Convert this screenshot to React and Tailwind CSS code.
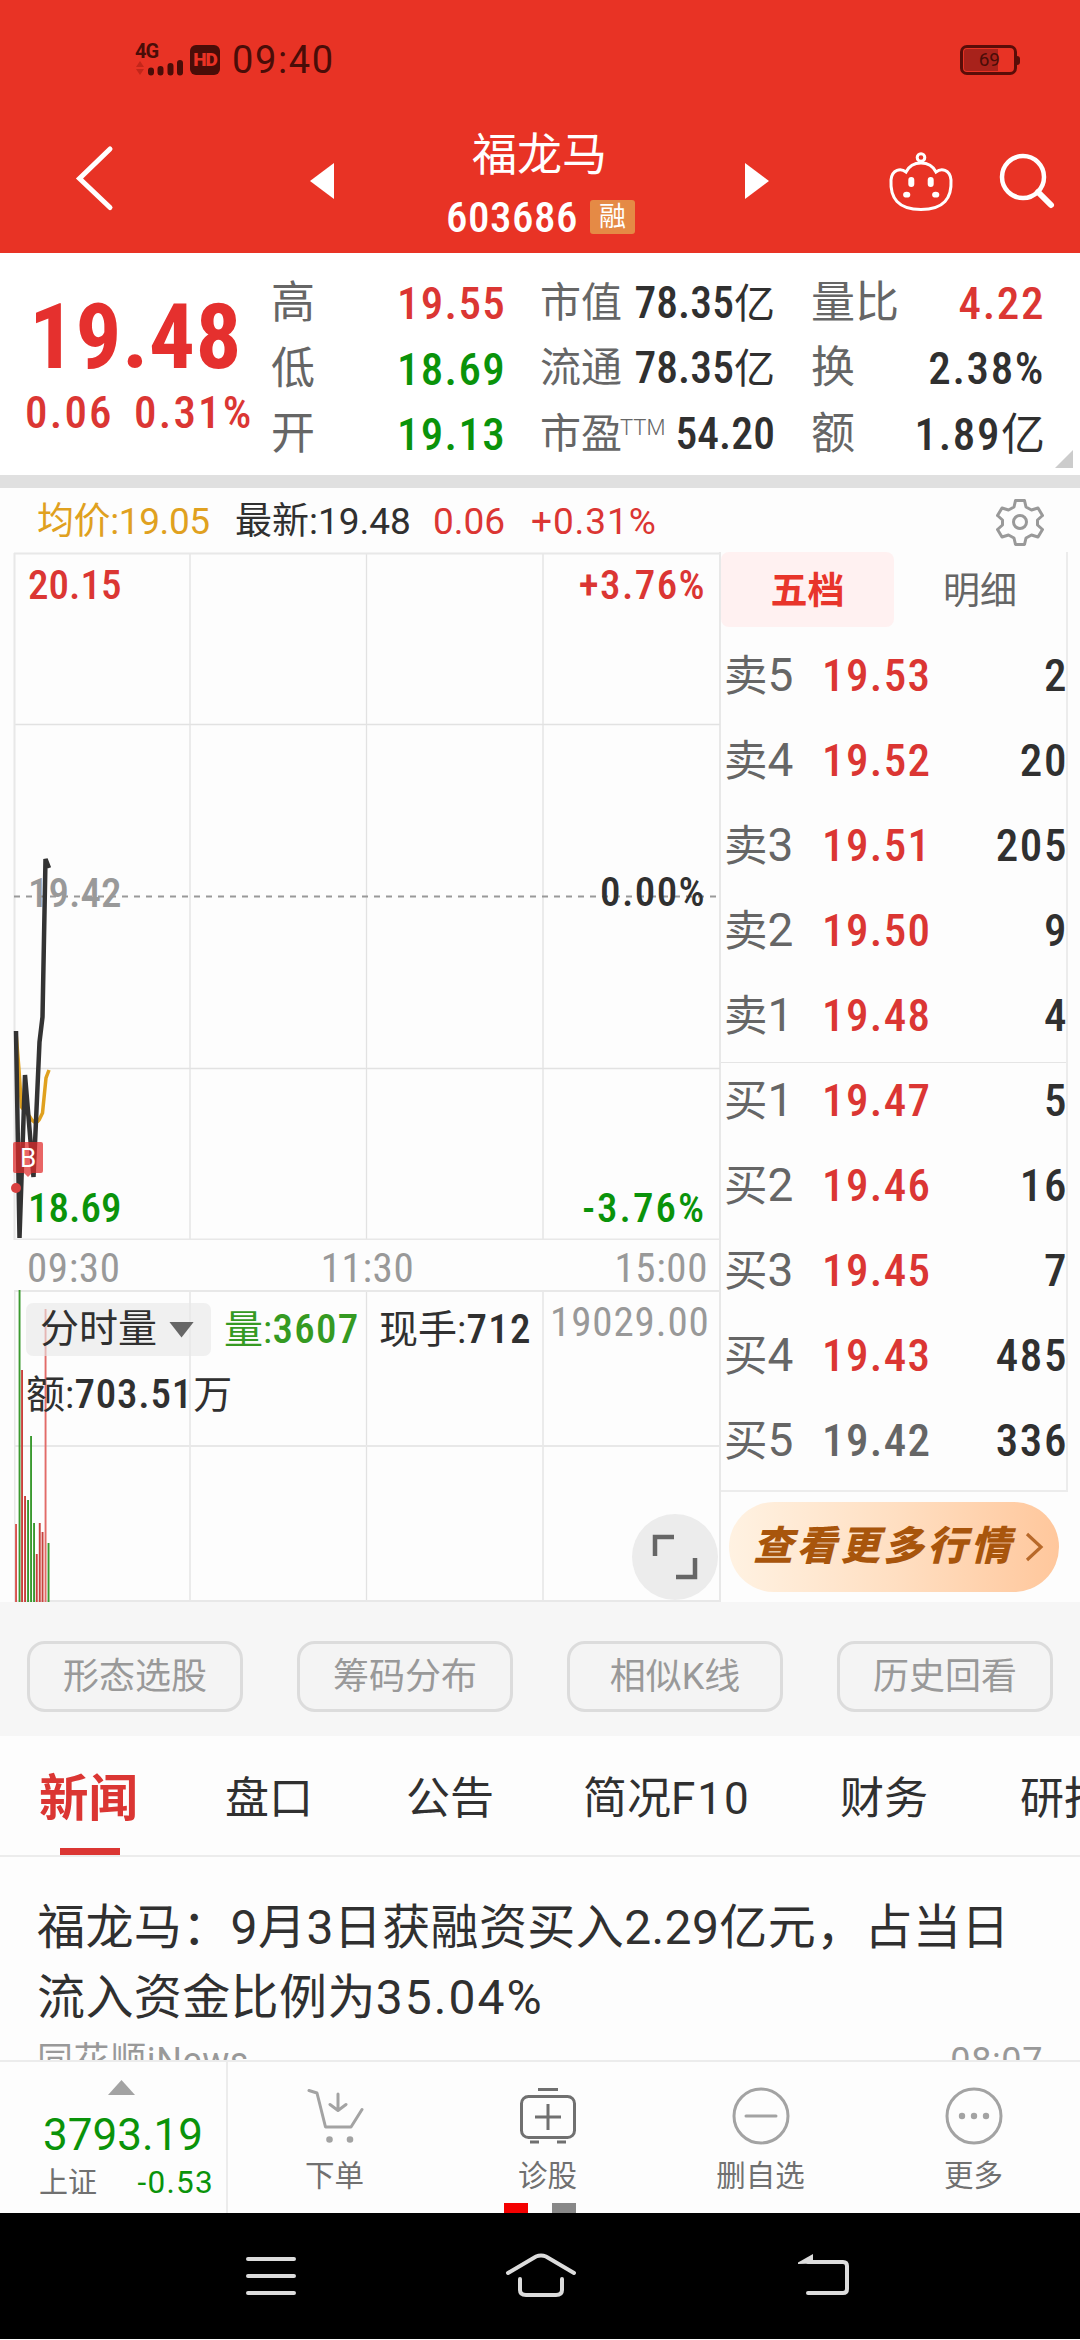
// src/App.jsx
import React from "react";

const RED = "text-[#db3633]";
const GREEN = "text-[#0a930a]";
const DARK = "text-[#303030]";

// narrow digits with a little air between them
const NUM = "font-medium [font-stretch:75%]";

const summaryRows = [
  {
    a: ["高", "19.55", RED],
    b: ["市值", "78.35", "亿"],
    c: ["量比", "4.22", "", RED],
  },
  {
    a: ["低", "18.69", GREEN],
    b: ["流通", "78.35", "亿"],
    c: ["换", "2.38%", "", DARK],
  },
  {
    a: ["开", "19.13", GREEN],
    b: ["市盈", "54.20", ""],
    c: ["额", "1.89", "亿", DARK],
  },
];

const sells = [
  ["卖5", "19.53", "2"],
  ["卖4", "19.52", "20"],
  ["卖3", "19.51", "205"],
  ["卖2", "19.50", "9"],
  ["卖1", "19.48", "4"],
];

const buys = [
  ["买1", "19.47", "5"],
  ["买2", "19.46", "16"],
  ["买3", "19.45", "7"],
  ["买4", "19.43", "485"],
  ["买5", "19.42", "336"],
];

// [x, height, color] for each minute
const volumes = [
  [2, 78, "#d9534f"],
  [5.5, 312, "#3a9a2f"],
  [8, 232, "#c9403c"],
  [11, 106, "#c9403c"],
  [14, 102, "#3a9a2f"],
  [17, 166, "#3a9a2f"],
  [20, 79, "#3a9a2f"],
  [22.7, 48, "#c9403c"],
  [25.7, 79, "#c9403c"],
  [28.5, 70, "#c9403c"],
  [31.5, 293, "#e26b68"],
  [34.5, 59, "#3a9a2f"],
];

function StatusBar() {
  return (
    <div className="flex h-[120px] items-center justify-between pl-[135px] pr-[60px] text-[#4a0d08]">
      <div className="flex items-center">
        <div className="h-[34px] w-[49px]">
          <div className="h-[16px] text-[20px] font-bold leading-[16px] tracking-[-1px]">4G</div>
          <svg className="block" width="49" height="18" viewBox="0 0 49 18">
            <path d="M1 8l4-6 4 6zM1 10h8l-4 6z" fill="#c3261a" />
            <path
              d="M16 11.500v2M25.500 10v3.500M35.500 7v6.500M45 4v9.500"
              stroke="currentColor"
              strokeWidth="6"
              strokeLinecap="round"
            />
          </svg>
        </div>
        <div className="ml-[6px] flex h-[30px] w-[30px] items-center justify-center rounded-[6px] bg-[#4a0d08] text-[19px] font-black tracking-[-1px] text-[#e83325]">
          HD
        </div>
        <div className="ml-[12px] text-[38px] leading-[40px] tracking-[1.6px]">09:40</div>
      </div>
      <div className="flex items-center">
        <div className="flex h-[30px] w-[57px] items-center rounded-[7px] border-[3px] border-[#5a0d08] p-[1px]">
          <div className="flex h-full w-[34px] items-center justify-end rounded-l-[3px] bg-[#a8221b] text-[19px] text-[#4a0d08]">
            <span className="-mr-[2px]">69</span>
          </div>
        </div>
        <div className="h-[9px] w-[3px] rounded-r bg-[#5a0d08]" />
      </div>
    </div>
  );
}

function Header() {
  return (
    <div className="h-[253px] bg-[#e83325]">
      <StatusBar />
      <div className="flex h-[133px] text-white">
        <svg width="448" height="133" viewBox="0 120 448 133" fill="none">
          <path d="M110 149L79.500 178.500L110 207.500" stroke="#fff" strokeWidth="5" strokeLinecap="round" />
          <path d="M334 163v36l-24-18z" fill="#fff" />
        </svg>
        <div className="flex w-[188px] flex-col">
          <div className="-ml-[5px] mt-[8px] h-[56px] text-center text-[45px] leading-[56px]">福龙马</div>
          <div className="flex h-[66px] items-center">
            <span className="-ml-[2px] text-[43px] font-medium leading-[44px] tracking-[0.5px] [font-stretch:75%]">
              603686
            </span>
            <span className="ml-auto mr-[1px] flex h-[34px] w-[45px] items-center justify-center rounded-[3px] bg-[#e58a45] text-[27px] leading-[34px]">
              融
            </span>
          </div>
        </div>
        <svg width="444" height="133" viewBox="636 120 444 133" fill="none">
          <path d="M745 163v36l24-18z" fill="#fff" />
          <g stroke="#fff" strokeWidth="3">
            <circle cx="921" cy="157.500" r="3.800" />
            <path d="M906 172C909 166 915 163 921 163S933 166 936 172C941 168 950 169 951 180C952 198 944 209.500 921 209.500S890 198 891 180C892 169 901 168 906 172z" />
          </g>
          <path d="M911.300 180v4M930.700 180v4" stroke="#fff" strokeWidth="6" strokeLinecap="round" />
          <ellipse cx="906.700" cy="194.700" rx="3.600" ry="2.900" fill="#fff" />
          <ellipse cx="935.700" cy="194.700" rx="3.600" ry="2.900" fill="#fff" />
          <circle cx="1023" cy="177" r="21" stroke="#fff" strokeWidth="4.500" />
          <path d="M1038 192l13 13" stroke="#fff" strokeWidth="6" strokeLinecap="round" />
        </svg>
      </div>
    </div>
  );
}

function Summary() {
  return (
    <div className="relative flex h-[222px] bg-white">
      <div className="w-[271px] pt-[37px]">
        <div className="h-[94px] pl-[29px] text-[91px] font-bold leading-[94px] tracking-[0.5px] text-[#e5302e] [font-stretch:75%]">
          19.48
        </div>
        <div className={`flex h-[56px] pl-[25px] text-[45px] leading-[58px] tracking-[2.2px] ${NUM} ${RED}`}>
          <span className="w-[109px]">0.06</span>
          <span>0.31%</span>
        </div>
      </div>
      <div className="flex-1 pt-[18px]">
        {summaryRows.map(({ a, b, c }) => (
          <div key={a[0]} className="flex h-[65.5px] items-center leading-[65px]">
            <div className="flex w-[235px] justify-between text-[44px]">
              <span className="text-[#666]">{a[0]}</span>
              <span className={`text-[45px] tracking-[1.3px] ${NUM} ${a[2]}`}>{a[1]}</span>
            </div>
            <div className={`ml-[34px] flex w-[235px] justify-between text-[41px] ${DARK}`}>
              <span className="flex text-[#666]">
                {b[0]}
                {b[0] === "市盈" && (
                  <span className="-ml-[2px] -mt-[7px] text-[22px] font-light">TTM</span>
                )}
              </span>
              <span>
                <span className={`text-[43.5px] tracking-[0.1px] ${NUM}`}>{b[1]}</span>
                {b[2]}
              </span>
            </div>
            <div className="ml-[36px] flex w-[234px] justify-between text-[44px]">
              <span className="text-[#666]">{c[0]}</span>
              <span className={c[3]}>
                <span className={`text-[45px] tracking-[1.6px] ${NUM}`}>{c[1]}</span>
                {c[2]}
              </span>
            </div>
          </div>
        ))}
      </div>
      <div className="absolute bottom-[7px] right-[7px] h-[18px] w-[18px] bg-[#ccc] [clip-path:polygon(100%_0,100%_100%,0_100%)]" />
    </div>
  );
}

function QuoteLine() {
  return (
    <div className="flex h-[64px] items-center pl-[37px] pr-[36px] pt-[3px] text-[37px] leading-[64px]">
      <span className="w-[198px] tracking-[-0.4px] text-[#e0a11f]">均价:19.05</span>
      <span className={`w-[198px] ${DARK}`}>最新:19.48</span>
      <span className={`w-[98px] ${RED}`}>0.06</span>
      <span className={`tracking-[0.9px] ${RED}`}>+0.31%</span>
      <svg className="ml-auto" width="48" height="48" viewBox="0 0 48 48" fill="none" stroke="#999" strokeWidth="3" strokeLinejoin="round">
        <path d="M19.500 2.500h9l1.500 6.500l5.500 3l6.500-2l4.500 7.500l-5 4.500v5l5 4.500l-4.500 7.500l-6.500-2l-5.500 3l-1.500 6.500h-9l-1.500-6.500l-5.500-3l-6.500 2l-4.500-7.500l5-4.500v-5l-5-4.500l4.500-7.500l6.500 2l5.500-3z" />
        <circle cx="24" cy="24" r="6.500" />
      </svg>
    </div>
  );
}

function PriceChart() {
  return (
    <div className={`relative h-[688px] text-[41px] leading-[40px] ${NUM}`}>
      <div className="absolute left-[28px] top-[321px] text-[#999]">19.42</div>
      <svg className="absolute left-0 top-0" width="721" height="688" viewBox="0 552 721 688" fill="none">
        <path d="M14 724.500H720M14 1068.500H720M190 553V1240M366.500 553V1240M543 553V1240" stroke="#e2e2e2" strokeWidth="1.300" />
        <path d="M14 553.500H720M14 1239.500H720M14.500 553V1240" stroke="#e8e8e8" strokeWidth="2" />
        <path d="M14 896.500H716" stroke="#999" strokeWidth="2" strokeDasharray="6 6" />
        <path
          d="M16 1032L19 1070L21.500 1107L30 1117Q35 1126 39 1120L42.500 1113L46 1078L49 1070"
          stroke="#e0a11f"
          strokeWidth="3.500"
        />
        <path
          d="M16 1031L19.500 1238L25 1075L33.500 1177L39.500 1042L42.500 1017L45.500 859L49 868"
          stroke="#333"
          strokeWidth="4.500"
          strokeLinejoin="bevel"
        />
        <path d="M15 1142h26a2 2 0 0 1 2 2v27a2 2 0 0 1-2 2h-9l-4 4l-4-4h-9a2 2 0 0 1-2-2v-27a2 2 0 0 1 2-2z" fill="#e02a2a" fillOpacity="0.72" />
        <circle cx="16" cy="1188" r="5" fill="#d94040" />
      </svg>
      <div className="absolute left-[20px] top-[591px] text-[26px] font-normal leading-[30px] text-white [font-stretch:100%]">
        B
      </div>
      <div className={`absolute left-[28px] top-[13px] ${RED}`}>20.15</div>
      <div className={`absolute right-[13px] top-[13px] tracking-[1.4px] ${RED}`}>+3.76%</div>
      <div className={`absolute right-[13px] top-[320px] tracking-[1.4px] ${DARK}`}>0.00%</div>
      <div className={`absolute left-[28px] top-[636px] ${GREEN}`}>18.69</div>
      <div className={`absolute right-[13px] top-[636px] tracking-[2px] ${GREEN}`}>-3.76%</div>
    </div>
  );
}

function VolumeChart() {
  return (
    <div className="relative h-[312px]">
      <svg className="absolute left-[14px] top-0" width="706" height="312" viewBox="0 0 706 312" fill="none">
        <path d="M176 0V312M352.500 0V312M529 0V312" stroke="#e2e2e2" strokeWidth="1.300" />
        <path d="M0 1H706M0 156H706M0 311H706M0.500 0V312" stroke="#e8e8e8" strokeWidth="2" />
        {volumes.map(([x, h, color]) => (
          <rect key={x} x={x - 0.9} y={312 - h} width="1.9" height={h} fill={color} />
        ))}
      </svg>
      <div className="relative pl-[26px] pt-[13px]">
        <div className={`flex h-[53px] text-[39px] leading-[53px] ${DARK}`}>
          <div className="flex w-[185px] items-center rounded-[7px] bg-[#e8e8e8]/60 pl-[14px]">
            分时量
            <span className="ml-[12px] h-[16px] w-[25px] bg-[#666] [clip-path:polygon(0_0,100%_0,50%_100%)]" />
          </div>
          <div className="ml-[13px] w-[155px] text-[#359a22]">
            量:<span className={`text-[41px] tracking-[1.3px] ${NUM}`}>3607</span>
          </div>
          <div className="w-[171px]">
            现手:<span className={`text-[41px] tracking-[1.3px] ${NUM}`}>712</span>
          </div>
          <div className="-mt-[7px] text-[41px] tracking-[0.9px] text-[#999] [font-stretch:75%]">19029.00</div>
        </div>
        <div className={`mt-[12px] h-[53px] text-[39px] leading-[53px] ${DARK}`}>
          额:<span className={`text-[41px] tracking-[0.8px] ${NUM}`}>703.51</span>万
        </div>
      </div>
      <svg className="absolute bottom-[2px] right-[1px]" width="86" height="86" viewBox="0 0 86 86" fill="none">
        <circle cx="43" cy="43" r="43" fill="#ececec" />
        <path d="M23 42V23H42M63 44V63H44" stroke="#666" strokeWidth="4.500" />
      </svg>
    </div>
  );
}

function BookRow({ row }) {
  const [label, price, qty] = row;
  const priceColor = price === "19.42" ? "text-[#666]" : RED;
  return (
    <div className="flex h-[85px] items-center pb-[10px] text-[45px] leading-[74px]">
      <span className="w-[101px] pl-[3px] text-[43.5px] text-[#666]">
        {label[0]}
        <span className="text-[46px]">{label[1]}</span>
      </span>
      <span className={`tracking-[1.4px] ${NUM} ${priceColor}`}>{price}</span>
      <span className={`-mr-[2px] ml-auto tracking-[1.6px] ${NUM} ${DARK}`}>{qty}</span>
    </div>
  );
}

function OrderBook() {
  return (
    <div className="flex w-[359px] flex-col">
      <div className="h-[940px] w-[347px] border-b-2 border-r-2 border-[#ececec]">
        <div className="flex h-[86px] text-[37px] leading-[79px]">
          <div className="h-[75px] w-[173px] rounded-[8px] bg-[#fff1f1] text-center font-bold text-[#e8352b]">五档</div>
          <div className="flex-1 text-center text-[#666]">明细</div>
        </div>
        {sells.map((r) => (
          <BookRow key={r[0]} row={r} />
        ))}
        <div className="-mt-px border-t border-[#e5e5e5]">
          {buys.map((r) => (
            <BookRow key={r[0]} row={r} />
          ))}
        </div>
      </div>
      <button className="ml-[8px] mt-[10px] flex h-[90px] w-[330px] items-center rounded-full bg-linear-to-r from-[#fff2e2] via-[#ffdfc2] to-[#ffc79c] pl-[24px]">
        <span className="whitespace-nowrap text-[40px] font-black italic leading-[60px] tracking-[3.5px] text-[#a8550c]">
          查看更多行情
        </span>
        <svg className="ml-[10px]" width="20" height="30" viewBox="0 0 20 30" fill="none">
          <path d="M3 2L17 15L3 28" stroke="#b8692a" strokeWidth="3.200" />
        </svg>
      </button>
    </div>
  );
}

function ToolStrip() {
  return (
    <div className="flex h-[134px] justify-between bg-[#f6f6f6] px-[27px] pt-[39px]">
      {["形态选股", "筹码分布", "相似K线", "历史回看"].map((t) => (
        <button
          key={t}
          className="h-[71px] w-[216px] rounded-[18px] border-[3px] border-[#dcdcdc] bg-[#f4f4f4] text-[36px] leading-[67px] text-[#999]"
        >
          {t}
        </button>
      ))}
    </div>
  );
}

function NewsTabs() {
  return (
    <div className="flex h-[121px] overflow-hidden whitespace-nowrap border-b-2 border-[#ececec] pl-[39px] text-[44px] leading-[126px] text-[#303030]">
      <div className="flex w-[186px] shrink-0 flex-col">
        <span className="h-[112px] text-[49.5px] font-bold leading-[126px] text-[#db3633]">新闻</span>
        <span className="ml-[21px] h-[7px] w-[60px] bg-[#db3633]" />
      </div>
      <span className="w-[181px] shrink-0">盘口</span>
      <span className="w-[177px] shrink-0">公告</span>
      <span className="w-[257px] shrink-0">
        简况<span className="tracking-[2px]">F10</span>
      </span>
      <span className="w-[180px] shrink-0">财务</span>
      <span className="shrink-0">研报</span>
    </div>
  );
}

function News() {
  return (
    <div className="h-[203px] overflow-hidden px-[37px] pt-[36px]">
      <div className={`whitespace-nowrap text-[48px] leading-[70px] tracking-[0.4px] ${DARK}`}>
        福龙马：9月3日获融资买入2.29亿元，占当日
        <br />
        流入资金比例为<span className="tracking-[2px]">35.04%</span>
      </div>
      <div className="mt-[2px] flex justify-between text-[36px] leading-[52px] tracking-[0.6px] text-[#999]">
        <span>同花顺iNews</span>
        <span>08:07</span>
      </div>
    </div>
  );
}

function BottomBar() {
  const items = [
    {
      label: "下单",
      icon: (
        <g stroke="#a3a3a3" strokeWidth="3" strokeLinecap="round" strokeLinejoin="round">
          <path d="M3 3.500L11 6L19.500 40H45L56 22.500M32 7V23M24 17.500L32 23.500L40 17.500" />
          <circle cx="23.500" cy="52.500" r="1.800" fill="#a3a3a3" />
          <circle cx="44" cy="52.500" r="1.800" fill="#a3a3a3" />
        </g>
      ),
    },
    {
      label: "诊股",
      icon: (
        <g stroke="#707070" strokeWidth="3">
          <rect x="2.500" y="9.500" width="53" height="41" rx="7" />
          <path d="M19 2.500H39M11 55H20M38 55H47M29 17V43M16 30H42" />
        </g>
      ),
    },
    {
      label: "删自选",
      icon: (
        <g stroke="#a3a3a3" strokeWidth="3" strokeLinecap="round">
          <circle cx="29" cy="29" r="27" />
          <path d="M14 29H44" />
        </g>
      ),
    },
    {
      label: "更多",
      icon: (
        <g fill="#a3a3a3">
          <circle cx="29" cy="29" r="27" fill="none" stroke="#a3a3a3" strokeWidth="3" />
          <circle cx="17" cy="29" r="3.200" />
          <circle cx="29" cy="29" r="3.200" />
          <circle cx="41" cy="29" r="3.200" />
        </g>
      ),
    },
  ];

  return (
    <div className="relative flex h-[153px] border-t-2 border-[#ececec] bg-[#fdfdfd]">
      <div className="flex w-[228px] flex-col border-r-2 border-[#ececec] pt-[18px]">
        <span className="ml-[108px] h-[15px] w-[27px] bg-[#a3a3a3] [clip-path:polygon(50%_0,100%_100%,0_100%)]" />
        <span className={`mt-[13px] pl-[43px] text-[44px] leading-[54px] ${GREEN}`}>3793.19</span>
        <span className="flex justify-between pl-[39px] pr-[12px] text-[29px] leading-[42px] text-[#707070]">
          上证 <span className={`text-[31.5px] tracking-[1.3px] ${GREEN}`}>-0.53</span>
        </span>
      </div>
      {items.map((it) => (
        <div key={it.label} className="flex flex-1 flex-col items-center pt-[25px]">
          <svg width="58" height="58" viewBox="0 0 58 58" fill="none">
            {it.icon}
          </svg>
          <span className="mt-[11px] text-[29.5px] leading-[40px] text-[#707070]">{it.label}</span>
        </div>
      ))}
      {/* page indicator */}
      <div className="absolute bottom-0 left-[504px] flex gap-6">
        <span className="h-[10px] w-[24px] bg-[#f40000]" />
        <span className="h-[10px] w-[24px] bg-[#888]" />
      </div>
    </div>
  );
}

function NavBar() {
  return (
    <div className="h-[126px] bg-black">
      <svg width="1080" height="126" viewBox="0 2214 1080 126" fill="none" stroke="#dcdcdc" strokeWidth="4" strokeLinecap="round">
        <path d="M248 2260H294M248 2277H294M248 2294H294" />
        <path d="M508 2274L536 2257.500Q541 2255.500 546 2257.500L574 2274" />
        <path d="M520 2280V2291Q520 2296 526 2296H556Q562 2296 562 2291V2280" />
        <path d="M808 2294H843Q847 2294 847 2290V2267Q847 2263 843 2263H808" />
        <path d="M798 2263.500L813 2255V2264.500L798 2265z" fill="#dcdcdc" stroke="none" />
      </svg>
    </div>
  );
}

export default function App() {
  return (
    <div className="h-[2340px] w-[1080px] overflow-hidden bg-[#fdfdfd] font-[Roboto,'Noto_Sans_CJK_SC',sans-serif]">
      <Header />
      <Summary />
      <div className="h-[13px] bg-[#e0e0e0]" />
      <QuoteLine />
      <div className="flex h-[1050px]">
        <div className="w-[721px] border-r-2 border-[#e8e8e8]">
          <PriceChart />
          <div className="flex h-[50px] justify-between pl-[27px] pr-[11px] text-[41px] leading-[56px] tracking-[0.6px] text-[#999] [font-stretch:75%]">
            <span>09:30</span>
            <span>11:30</span>
            <span>15:00</span>
          </div>
          <VolumeChart />
        </div>
        <OrderBook />
      </div>
      <ToolStrip />
      <NewsTabs />
      <News />
      <BottomBar />
      <NavBar />
    </div>
  );
}
